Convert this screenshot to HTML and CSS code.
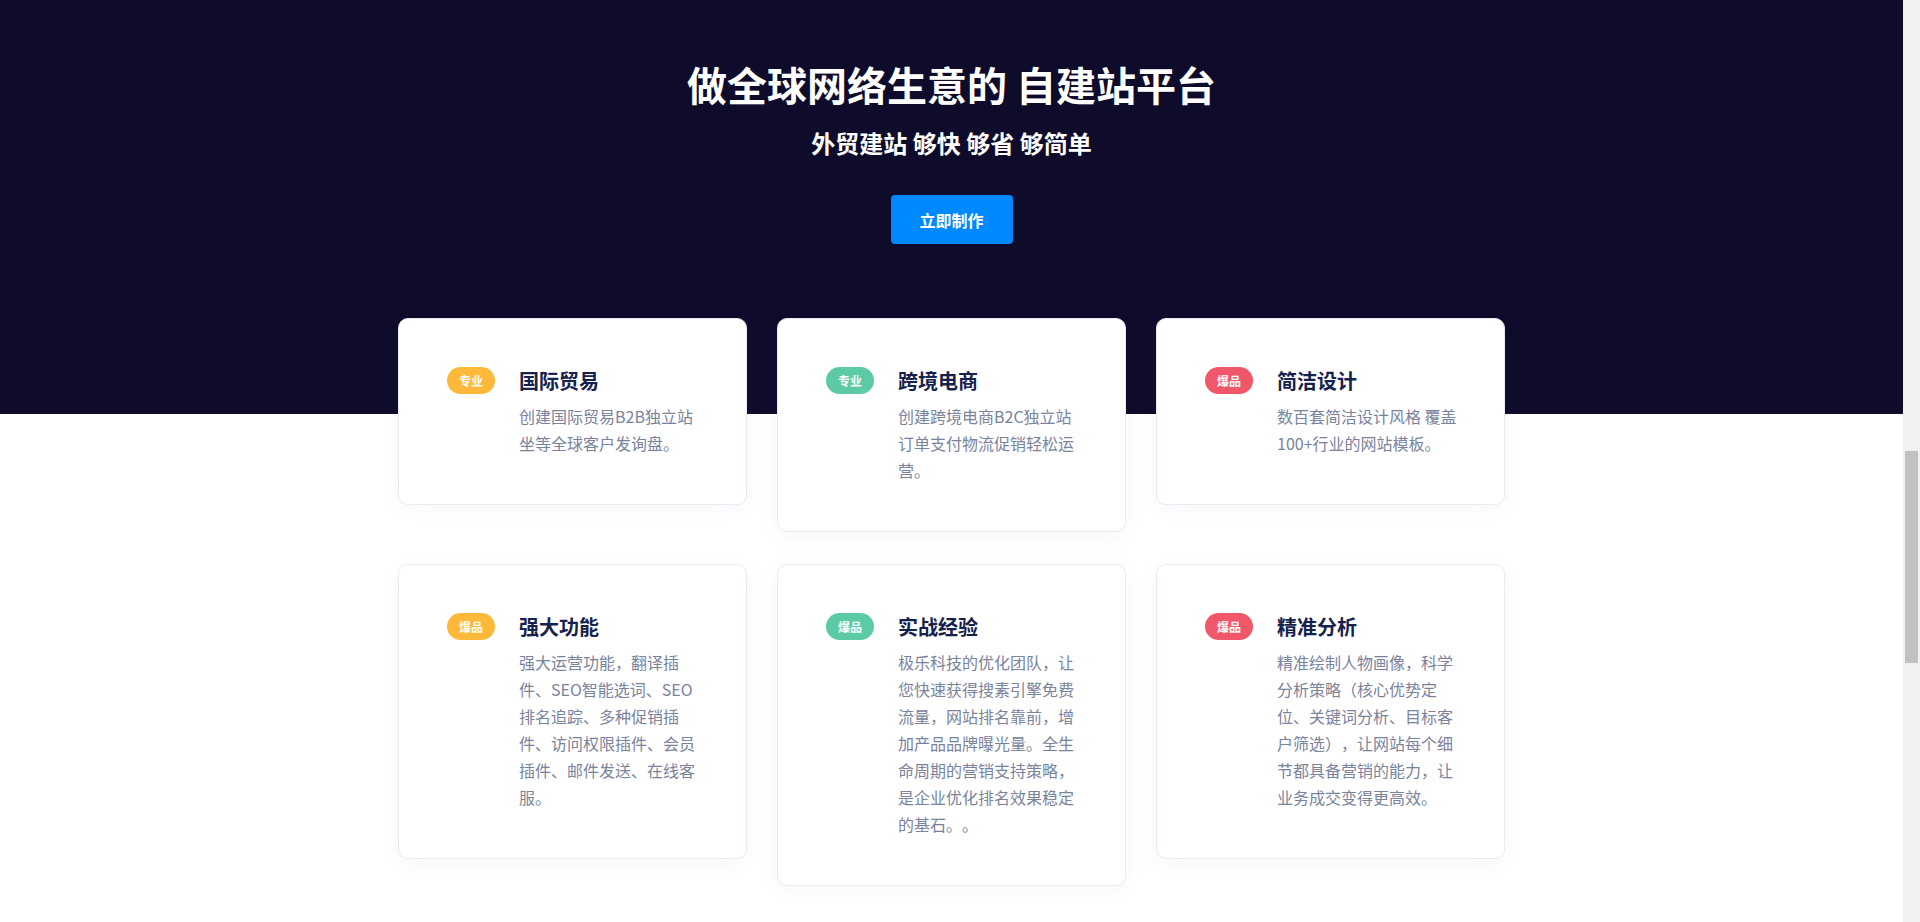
FILE: index.html
```html
<!DOCTYPE html>
<html lang="zh-CN">
<head>
<meta charset="utf-8">
<title>做全球网络生意的 自建站平台</title>
<link rel="stylesheet" href="styles.css">
</head>
<body>
<main class="page">
  <section class="hero">
    <h1 class="hero-title">做全球网络生意的 自建站平台</h1>
    <p class="hero-sub">外贸建站 够快 够省 够简单</p>
    <a class="hero-btn" href="#">立即制作</a>
  </section>
  <section class="features">
    <div class="grid">
      <div class="card">
        <span class="badge yellow">专业</span>
        <div class="body">
          <h3 class="title">国际贸易</h3>
          <p class="desc">创建国际贸易B2B独立站坐等全球客户发询盘。</p>
        </div>
      </div>
      <div class="card">
        <span class="badge green">专业</span>
        <div class="body">
          <h3 class="title">跨境电商</h3>
          <p class="desc">创建跨境电商B2C独立站订单支付物流促销轻松运营。</p>
        </div>
      </div>
      <div class="card">
        <span class="badge red">爆品</span>
        <div class="body">
          <h3 class="title">简洁设计</h3>
          <p class="desc">数百套简洁设计风格 覆盖100+行业的网站模板。</p>
        </div>
      </div>
      <div class="card">
        <span class="badge yellow">爆品</span>
        <div class="body">
          <h3 class="title">强大功能</h3>
          <p class="desc">强大运营功能，翻译插件、SEO智能选词、SEO排名追踪、多种促销插件、访问权限插件、会员插件、邮件发送、在线客服。</p>
        </div>
      </div>
      <div class="card">
        <span class="badge green">爆品</span>
        <div class="body">
          <h3 class="title">实战经验</h3>
          <p class="desc">极乐科技的优化团队，让您快速获得搜素引擎免费流量，网站排名靠前，增加产品品牌曝光量。全生命周期的营销支持策略，是企业优化排名效果稳定的基石。。</p>
        </div>
      </div>
      <div class="card">
        <span class="badge red">爆品</span>
        <div class="body">
          <h3 class="title">精准分析</h3>
          <p class="desc">精准绘制人物画像，科学分析策略（核心优势定位、关键词分析、目标客户筛选），让网站每个细节都具备营销的能力，让业务成交变得更高效。</p>
        </div>
      </div>
    </div>
  </section>
</main>
<div class="scrollbar" aria-hidden="true"><div class="thumb"></div></div>
</body>
</html>
```
FILE: styles.css
```css
body {
  margin: 0;
  font-family: "Microsoft YaHei", "Noto Sans CJK SC", "Noto Sans", sans-serif;
  background: #ffffff;
  text-spacing-trim: space-all;
}
.page {
  margin-right: 17px;
  height: 922px;
  overflow: hidden;
}
.scrollbar {
  position: fixed;
  top: 0;
  right: 0;
  bottom: 0;
  width: 17px;
  background: #f1f1f1;
  display: flex;
  justify-content: center;
  padding-top: 451px;
  box-sizing: border-box;
}
.thumb {
  width: 13px;
  height: 212px;
  background: #c1c1c1;
}
.hero {
  background: #0f0c2b;
  padding: 56px 0 170px;
  text-align: center;
  color: #ffffff;
}
.hero-title {
  margin: 0;
  font-size: 40px;
  line-height: 56px;
  font-weight: 700;
}
.hero-sub {
  margin: 14px 0 0;
  font-size: 24px;
  line-height: 34px;
  font-weight: 700;
}
.hero-btn {
  display: inline-flex;
  align-items: center;
  justify-content: center;
  width: 122px;
  height: 49px;
  margin-top: 35px;
  background: #0088ff;
  color: #ffffff;
  border-radius: 4px;
  font-size: 16px;
  font-weight: 700;
  text-decoration: none;
}
.features {
  margin-top: -96px;
}
.grid {
  width: 1107px;
  margin: 0 auto;
  display: grid;
  grid-template-columns: repeat(3, 349px);
  column-gap: 30px;
  row-gap: 32px;
  align-items: start;
}
.card {
  box-sizing: border-box;
  display: flex;
  gap: 24px;
  padding: 48px 40px 47px 48px;
  background: #ffffff;
  border: 1px solid #e9ebf2;
  border-radius: 10px;
  box-shadow: 0 4px 20px rgba(30, 40, 90, 0.04);
}
.badge {
  flex: 0 0 48px;
  height: 27px;
  border-radius: 14px;
  color: #ffffff;
  font-size: 12px;
  line-height: 27px;
  font-weight: 700;
  text-align: center;
}
.badge.yellow { background: #ffb93a; }
.badge.green { background: #5ccba5; }
.badge.red { background: #f1576b; }
.body {
  width: 186px;
}
.title {
  margin: 0 0 8px;
  font-size: 20px;
  line-height: 28px;
  font-weight: 700;
  color: #15224d;
}
.desc {
  margin: 0;
  font-size: 16px;
  line-height: 27px;
  color: #7a839c;
}
```
